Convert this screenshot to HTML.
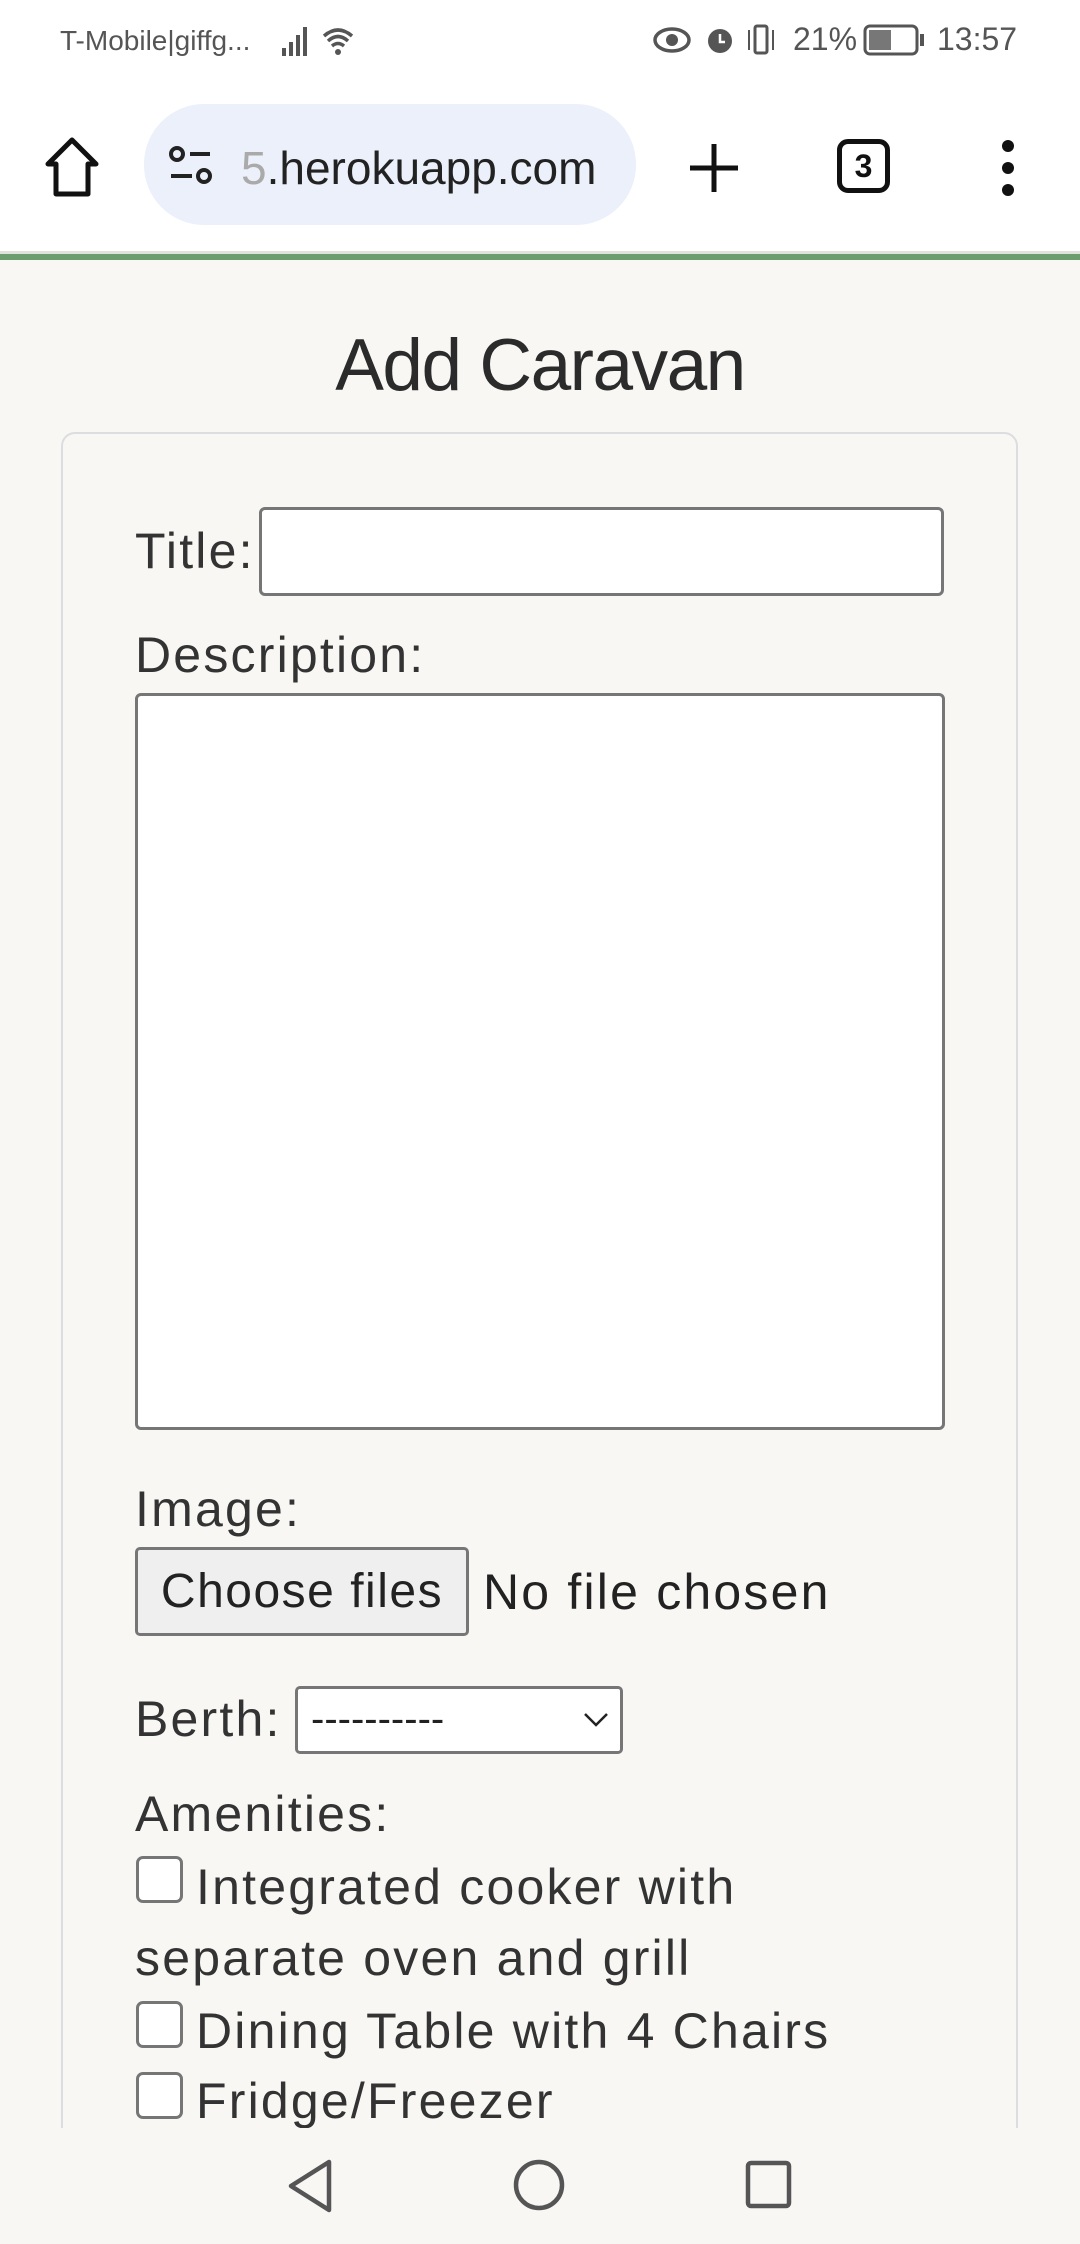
<!DOCTYPE html>
<html><head><meta charset="utf-8">
<style>
*{margin:0;padding:0;box-sizing:border-box}
body{width:1080px;height:2244px;background:#f8f7f4;font-family:"Liberation Sans",sans-serif;color:#333;position:relative;overflow:hidden}
.a{position:absolute;white-space:nowrap}
.lbl{font-size:50px;letter-spacing:2.2px;color:#333;line-height:1}
.box{position:absolute;background:#fff;border:3px solid #767676;border-radius:6px}
.cb{position:absolute;width:47px;height:47px;border:3px solid #767676;border-radius:7px;background:#fff}
</style></head><body>
<div class="a" style="left:0;top:0;width:1080px;height:252px;background:#fff"></div>
<div class="a" style="left:60px;top:25px;font-size:28px;color:#555">T-Mobile|giffg...</div>
<svg class="a" style="left:280px;top:22px" width="80" height="36" viewBox="0 0 80 36">
<rect x="2" y="26" width="4" height="8" fill="#555"/><rect x="9" y="20" width="4" height="14" fill="#555"/><rect x="16" y="13" width="4" height="21" fill="#555"/><rect x="23" y="5" width="4" height="29" fill="#555"/>
<path d="M44 14 Q58 2 72 14 M48 19 Q58 10 68 19 M52 24 Q58 19 64 24" stroke="#555" stroke-width="3.5" fill="none"/><circle cx="58" cy="30" r="3" fill="#555"/></svg>
<svg class="a" style="left:652px;top:22px" width="130" height="36" viewBox="0 0 130 36">
<ellipse cx="20" cy="18" rx="17" ry="11" fill="none" stroke="#555" stroke-width="3.5"/><circle cx="20" cy="18" r="6" fill="#555"/>
<circle cx="68" cy="19" r="12" fill="#555"/><path d="M68 12v8h5" stroke="#fff" stroke-width="2.5" fill="none"/>
<rect x="103" y="4" width="12" height="27" rx="2" fill="none" stroke="#555" stroke-width="3"/><path d="M97 8v20M121 8v20" stroke="#555" stroke-width="2"/></svg>
<div class="a" style="left:793px;top:21px;font-size:32px;color:#555">21%</div>
<svg class="a" style="left:863px;top:22px" width="65" height="36" viewBox="0 0 65 36"><rect x="2" y="4" width="52" height="28" rx="5" fill="none" stroke="#555" stroke-width="3"/><rect x="6" y="8" width="22" height="20" fill="#777"/><rect x="57" y="12" width="4" height="12" fill="#555"/></svg>
<div class="a" style="left:937px;top:21px;font-size:32px;color:#555">13:57</div>
<svg class="a" style="left:42px;top:136px" width="60" height="62" viewBox="0 0 60 62"><path d="M6 28 L30 4 L54 28 H46 V58 H14 V28 Z" fill="none" stroke="#111" stroke-width="5" stroke-linejoin="round"/></svg>
<div class="a" style="left:144px;top:104px;width:492px;height:121px;border-radius:60px;background:#ebf0fa"></div>
<svg class="a" style="left:168px;top:145px" width="50" height="42" viewBox="0 0 50 42"><circle cx="9" cy="9" r="6" fill="none" stroke="#222" stroke-width="4"/><path d="M22 9H42M3 31H24" stroke="#222" stroke-width="4"/><circle cx="36" cy="31" r="6" fill="none" stroke="#222" stroke-width="4"/></svg>
<div class="a" style="left:241px;top:141px;font-size:46px;color:#222"><span style="color:#aaa">5</span>.herokuapp.com</div>
<svg class="a" style="left:688px;top:142px" width="52" height="52"><path d="M26 2V50M2 26H50" stroke="#111" stroke-width="5"/></svg>
<div class="a" style="left:837px;top:139px;width:53px;height:54px;border:5px solid #111;border-radius:11px;font-size:32px;font-weight:bold;text-align:center;line-height:44px;color:#111">3</div>
<svg class="a" style="left:996px;top:138px" width="24" height="60"><circle cx="12" cy="8" r="6" fill="#111"/><circle cx="12" cy="30" r="6" fill="#111"/><circle cx="12" cy="52" r="6" fill="#111"/></svg>
<div class="a" style="left:0;top:251px;width:1080px;height:4px;background:#e2e2dc"></div>
<div class="a" style="left:0;top:254px;width:1080px;height:6px;background:#6b9d6f"></div>
<div class="a" style="left:0;top:324px;width:1080px;text-align:center;font-size:73px;letter-spacing:-1.5px;color:#2b2b2b">Add Caravan</div>
<div class="a" style="left:61px;top:432px;width:957px;height:1800px;border:2px solid #dcdde0;border-radius:14px;background:#f8f7f4"></div>
<div class="a lbl" style="left:135px;top:526px">Title:</div>
<div class="box" style="left:259px;top:507px;width:685px;height:89px"></div>
<div class="a lbl" style="left:135px;top:630px">Description:</div>
<div class="box" style="left:135px;top:693px;width:810px;height:737px"></div>
<div class="a lbl" style="left:135px;top:1484px">Image:</div>
<div class="a" style="left:135px;top:1547px;width:334px;height:89px;background:#efefef;border:3px solid #767676;border-radius:5px;font-size:48px;letter-spacing:1.5px;text-align:center;line-height:84px;color:#222">Choose files</div>
<div class="a lbl" style="left:483px;top:1567px;color:#222">No file chosen</div>
<div class="a lbl" style="left:135px;top:1694px">Berth:</div>
<div class="box" style="left:295px;top:1686px;width:328px;height:68px;border-radius:5px"></div>
<div class="a" style="left:311px;top:1697px;font-size:40px;color:#222">----------</div>
<svg class="a" style="left:583px;top:1712px" width="26" height="16"><path d="M2 2L13 13L24 2" stroke="#222" stroke-width="2.5" fill="none"/></svg>
<div class="a lbl" style="left:135px;top:1789px">Amenities:</div>
<div class="cb" style="left:136px;top:1856px"></div>
<div class="a lbl" style="left:196px;top:1862px">Integrated cooker with</div>
<div class="a lbl" style="left:135px;top:1933px">separate oven and grill</div>
<div class="cb" style="left:136px;top:2001px"></div>
<div class="a lbl" style="left:196px;top:2006px">Dining Table with 4 Chairs</div>
<div class="cb" style="left:136px;top:2072px"></div>
<div class="a lbl" style="left:196px;top:2076px">Fridge/Freezer</div>
<div class="a" style="left:0;top:2128px;width:1080px;height:116px;background:#f8f7f4"></div>
<svg class="a" style="left:285px;top:2158px" width="50" height="56"><path d="M44 4V52L6 28Z" fill="none" stroke="#555" stroke-width="4.5" stroke-linejoin="round"/></svg>
<svg class="a" style="left:512px;top:2158px" width="54" height="54"><circle cx="27" cy="27" r="23" fill="none" stroke="#555" stroke-width="4.5"/></svg>
<svg class="a" style="left:745px;top:2160px" width="48" height="50"><rect x="3" y="3" width="41" height="43" rx="3" fill="none" stroke="#555" stroke-width="4.5"/></svg>
</body></html>
